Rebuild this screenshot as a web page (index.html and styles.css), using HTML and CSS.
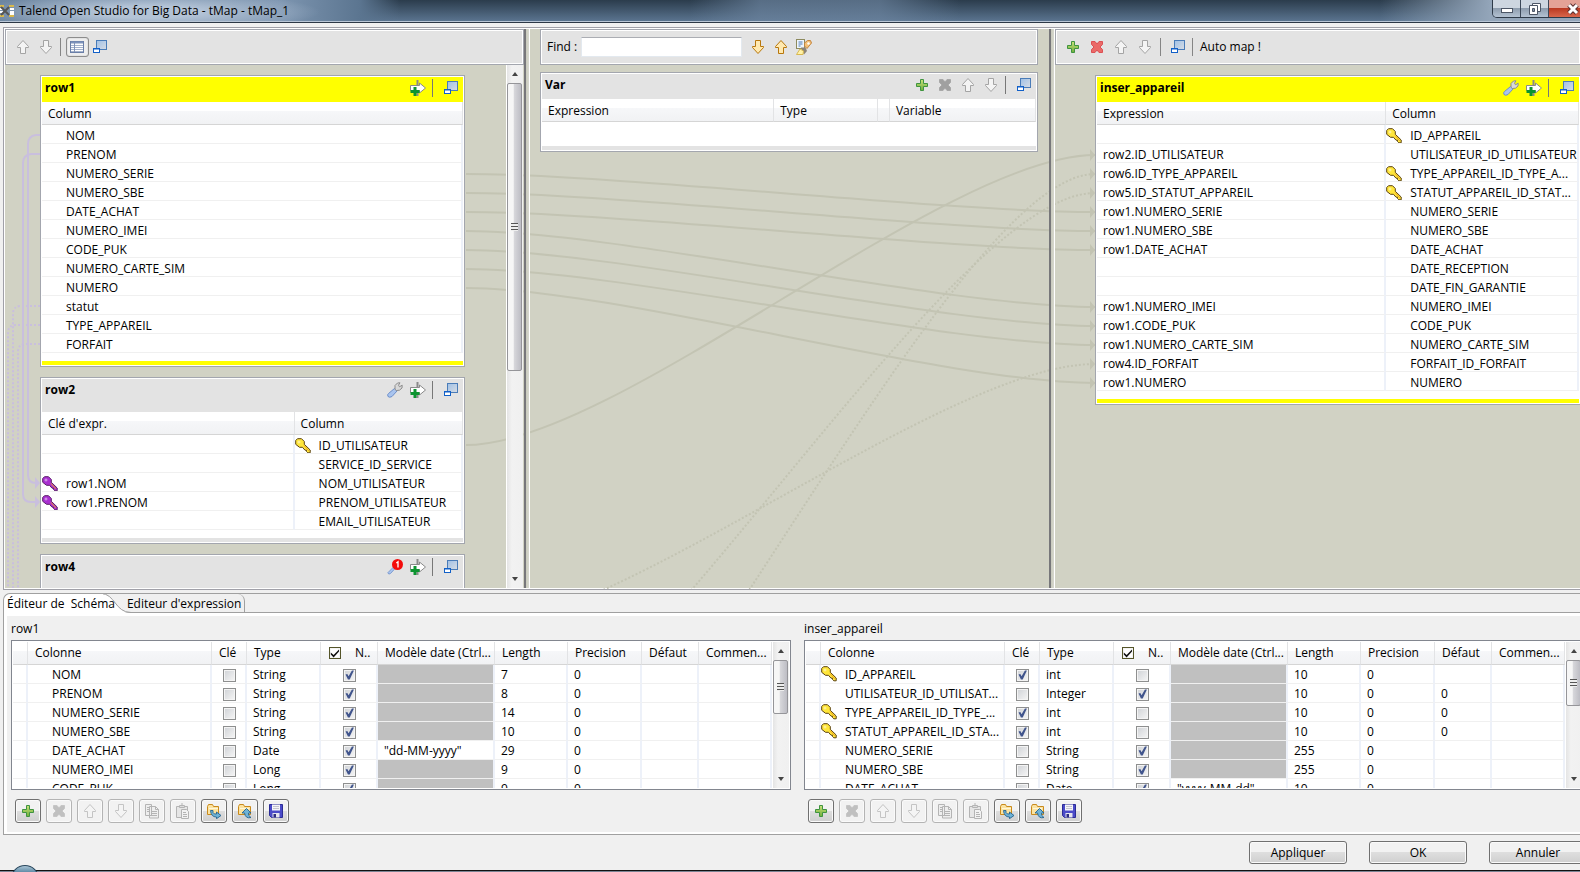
FILE: index.html
```html
<!DOCTYPE html>
<html lang="fr">
<head>
<meta charset="utf-8">
<title>Talend Open Studio for Big Data - tMap - tMap_1</title>
<link rel="stylesheet" href="styles.css">
</head>
<body>
<svg class="defs" aria-hidden="true">
  <defs>
    <linearGradient id="g-green" x1="0" y1="0" x2="0" y2="1"><stop offset="0" stop-color="#c9e27a"/><stop offset="1" stop-color="#6fae3c"/></linearGradient>
    <linearGradient id="g-win" x1="0" y1="0" x2="1" y2="1"><stop offset="0" stop-color="#9fc0e6"/><stop offset="1" stop-color="#d8dde4"/></linearGradient>
    <symbol id="up" viewBox="0 0 16 16"><path d="M8 1.5 13.5 7.5V8.5H10.5V14.5H5.5V8.5H2.5V7.5Z"/></symbol>
    <symbol id="down" viewBox="0 0 16 16"><path d="M8 14.5 13.5 8.5V7.5H10.5V1.5H5.5V7.5H2.5V8.5Z"/></symbol>
    <symbol id="plus" viewBox="0 0 16 16"><path d="M6.5 2.5h3v4h4v3h-4v4h-3v-4h-4v-3h4z"/></symbol>
    <symbol id="cross" viewBox="0 0 16 16"><path d="M2.5 2.5H6L8 5l2-2.500h3.500V5.500L11 8l2.500 2.500V13.500H10L8 11l-2 2.500H2.500V10.500L5 8 2.500 5.500Z"/></symbol>
    <symbol id="min" viewBox="0 0 16 16"><rect x="4.500" y="1.500" width="10" height="9" fill="url(#g-win)" stroke="#4a7cb8"/><rect x="1.500" y="9.500" width="6" height="4" fill="#fff" stroke="#1260c8"/><path d="M1 10h7" stroke="#1260c8"/></symbol>
    <symbol id="list" viewBox="0 0 16 16"><rect x="1.500" y="2.500" width="13" height="11" fill="#fff" stroke="#6a7fa8"/><path d="M2 3.500h12" stroke="#7d93bb" stroke-width="2"/><path d="M2 6.500h12M2 8.500h12M2 10.500h12M2 12.500h12" stroke="#a4b2cc"/><path d="M5.500 4v9" stroke="#8294b8"/></symbol>
    <symbol id="wrench" viewBox="0 0 16 16"><path d="M7.500 6.500 10 9 5 14.500Q2.500 16 1 14.500 0 12.500 1.500 11.500Z" fill="#a9c4ee" stroke="#6d8fca"/><path d="M8 7.500V3.500L10.500 1 13 .8 11.500 3.200 12.500 4.800 15.200 3.200 15 6 12.500 8.200 9.500 8.500Z" fill="#d9d9d9" stroke="#8c8c8c"/></symbol>
    <symbol id="alert" viewBox="0 0 16 16"><path d="M7 7.500 8.500 9 3.500 14.500Q1.500 16 .8 13.800Z" fill="#a9c4ee" stroke="#7d9bd0"/><circle cx="10.500" cy="5.500" r="5.500" fill="#f30c0c"/><path d="M9.300 4 11 2.800V8.500" fill="none" stroke="#fff" stroke-width="1.300"/></symbol>
    <symbol id="add" viewBox="0 0 16 16"><path d="M7.500 0V16" stroke="#8a8a8a" stroke-width="2"/><path d="M.5 5.500H9.500V3L15.500 8 9.500 13V10.500H.5Z" fill="#fff" stroke="#8a8a8a"/><path d="M5 7v9M.5 11.500h9" stroke="#0c9430" stroke-width="3"/></symbol>
    <symbol id="key" viewBox="0 0 16 16"><path d="M2.500 .7H6.500L9.300 3.500V6.300L15.200 12V14.800H12.800L11.500 13.500V12.200H10L7.500 9.300H4.500L.7 6.300V2.500Z"/><path class="ks" d="M9 7.500 13.800 12.800"/><path d="M2.500 4h3M4 2.500v3" stroke="#fff" opacity=".6"/></symbol>
    <symbol id="find" viewBox="0 0 16 16"><rect x=".5" y=".5" width="8" height="9" fill="#eef5fd" stroke="#8d8a5e"/><path d="M2.500 3h4M2.500 5h4M2.500 7h2" stroke="#4b78b4"/><path d="M8.500 7V4L11.500 1.500H14.500L15.500 4 11 9.500Z" fill="#f3c078" stroke="#c48640"/><circle cx="12.500" cy="4.500" r="1.200" fill="#fff"/><path d="M5 8.500H9.500L11 12 8 15.500 6 12Z" fill="#8b8478"/><path d="M4 10 .5 15.500H7L7.500 12Z" fill="#fff2a8" stroke="#d8b850"/></symbol>
    <symbol id="copy" viewBox="0 0 16 16"><path d="M1.500 1.500h6v11h-6zM5.500 3.500h6l3 3v8.500h-9zM11.500 3.500v3h3" fill="#eee" stroke="#b4b4b4"/><path d="M7 8.500h6M7 10.500h6M7 12.500h6M3 4.500h2M3 6.500h2M3 8.500h2" stroke="#b4b4b4"/></symbol>
    <symbol id="paste" viewBox="0 0 16 16"><path d="M1.500 3.500h11v11h-11z" fill="#e6e6e6" stroke="#b4b4b4"/><path d="M4.500 2.500h5v2h-5zM6 1h2" fill="#ddd" stroke="#b4b4b4"/><path d="M6.500 6.500h5l2 2v7h-7z" fill="#f2f2f2" stroke="#b4b4b4"/><path d="M8 9.500h3M8 11.500h4M8 13.500h4" stroke="#b4b4b4"/></symbol>
    <symbol id="import" viewBox="0 0 16 16"><path d="M1.500 3.500 2.500 1.500H6.500L7.500 3.500H12.500V11.500H1.500Z" fill="#fbe3a0" stroke="#c98a1c"/><path d="M3 5.500h9" stroke="#fff6d8"/><path d="M4.500 7.500H7V9.500Q8 11.500 10.500 11V9L15 12.500 10.500 15.700V14Q5 14 4.500 7.500Z" fill="#6fb3d6" stroke="#24628f" stroke-width=".9"/></symbol>
    <symbol id="export" viewBox="0 0 16 16"><path d="M1.500 3.500 2.500 1.500H6.500L7.500 3.500H13.500V11.500H1.500Z" fill="#fbe3a0" stroke="#c98a1c"/><path d="M3 5.500h9" stroke="#fff6d8"/><path d="M9.500 5.500 14 10H11.500Q11 13 14 14.500 8.500 16 7.500 10H5Z" fill="#6fb3d6" stroke="#24628f" stroke-width=".9"/></symbol>
    <symbol id="save" viewBox="0 0 16 16"><path d="M1.500 1.500h13v13h-11l-2-2z" fill="#4a4ac8" stroke="#2c2c96"/><path d="M4 1.500h8v6H4z" fill="#f4f4f8"/><path d="M5 3.500h6M5 5.500h6" stroke="#c4c4cc"/><path d="M4.500 10h7v4.500h-7z" fill="#e4e4ee"/><path d="M5.500 11h2.500v3.500H5.500z" fill="#2c2c80"/></symbol>
  </defs>
</svg>

<header class="titlebar">
  <svg class="app-icon" viewBox="0 0 14 16" aria-hidden="true"><path d="M0 3h4M0 13h4M9 3h5M9 13h5" stroke="#d8b84c" stroke-width="2"/><path d="M0 6h3M0 9h3M10 6h4M10 9h4M10 11h4" stroke="#fff" stroke-width="2"/><path d="M1 4 9 12M9 4 1 12" stroke="#555" stroke-width="2"/></svg>
  <h1>Talend Open Studio for Big Data - tMap - tMap_1</h1>
  <div class="win-buttons">
    <button aria-label="Réduire"><svg viewBox="0 0 16 14"><rect x="2.500" y="6.500" width="11" height="4" fill="#fff" stroke="#4c5666"/></svg></button>
    <button aria-label="Restaurer"><svg viewBox="0 0 16 14"><path d="M5.500 1.500h8v8h-8z" fill="#fff" stroke="#4c5666"/><path d="M2.500 3.500h8v9h-8z" fill="#fff" stroke="#4c5666"/><path d="M5.500 6.500h2v3h-2z" fill="#8594a8" stroke="#4c5666"/></svg></button>
    <button class="close" aria-label="Fermer"><svg viewBox="0 0 16 14"><path d="M4 3 12 11M12 3 4 11" stroke="#5a3030" stroke-width="5"/><path d="M4 3 12 11M12 3 4 11" stroke="#fff" stroke-width="3"/></svg></button>
  </div>
</header>

<main class="mapper">
  <svg class="links" aria-hidden="true">
    <g transform="translate(-4 -28)">
      <g class="flow">
        <path d="M466 174C616 174 945 212 1095 212"/>
        <path d="M466 193C616 193 945 231 1095 231"/>
        <path d="M466 212C616 212 945 250 1095 250"/>
        <path d="M466 231C616 231 945 307 1095 307"/>
        <path d="M466 250C616 250 945 326 1095 326"/>
        <path d="M466 269C616 269 945 345 1095 345"/>
        <path d="M466 288C616 288 945 383 1095 383"/>
        <path d="M466 445C616 445 945 155 1095 155"/>
      </g>
      <g class="flow dotted">
        <path d="M466 910C616 910 945 174 1095 174"/>
        <path d="M466 774C616 774 945 193 1095 193"/>
        <path d="M466 630C616 630 945 364 1095 364"/>
      </g>
      <path class="heads" d="M1090 149v12l5-6zM1090 168v12l5-6zM1090 187v12l5-6zM1090 206v12l5-6zM1090 225v12l5-6zM1090 244v12l5-6zM1090 301v12l5-6zM1090 320v12l5-6zM1090 339v12l5-6zM1090 358v12l5-6zM1090 377v12l5-6z"/>
      <g class="lookup">
        <path d="M40 135H36Q28 136 28 144V475Q28 483 36 483"/>
        <path d="M40 154H31Q23 155 23 163V494Q23 502 31 502H36"/>
      </g>
      <path class="lookup-heads" d="M35 477v12l5-6zM35 496v12l5-6z"/>
      <g class="lookup dotted">
        <path d="M40 306H21Q13 306 13 314V588"/>
        <path d="M40 325H16Q8 325 8 333V588"/>
        <path d="M40 344H26Q18 344 18 352V588"/>
      </g>
    </g>
  </svg>

  <section class="zone">
    <div class="bar">
      <button class="ib" aria-label="Monter" disabled><svg class="gray"><use href="#up"/></svg></button>
      <button class="ib" aria-label="Descendre" disabled><svg class="gray"><use href="#down"/></svg></button>
      <i class="sep"></i>
      <button class="ib toggled" aria-label="Schéma" aria-pressed="true"><svg><use href="#list"/></svg></button>
      <button class="ib" aria-label="Réduire tout"><svg><use href="#min"/></svg></button>
    </div>
    <div class="scroll-area">
      <div class="canvas inputs">
        <article class="box active">
          <header><h2>row1</h2><button class="ib" aria-label="Ajouter"><svg><use href="#add"/></svg></button><i class="sep"></i><button class="ib last" aria-label="Réduire"><svg><use href="#min"/></svg></button></header>
          <table class="map">
            <thead><tr><th>Column</th></tr></thead>
            <tbody class="inset">
              <tr><td>NOM</td></tr><tr><td>PRENOM</td></tr><tr><td>NUMERO_SERIE</td></tr><tr><td>NUMERO_SBE</td></tr>
              <tr><td>DATE_ACHAT</td></tr><tr><td>NUMERO_IMEI</td></tr><tr><td>CODE_PUK</td></tr><tr><td>NUMERO_CARTE_SIM</td></tr>
              <tr><td>NUMERO</td></tr><tr><td>statut</td></tr><tr><td>TYPE_APPAREIL</td></tr><tr><td>FORFAIT</td></tr>
            </tbody>
          </table>
        </article>
        <article class="box tall">
          <header><h2>row2</h2><button class="ib" aria-label="Paramètres"><svg><use href="#wrench"/></svg></button><button class="ib" aria-label="Ajouter"><svg><use href="#add"/></svg></button><i class="sep"></i><button class="ib last" aria-label="Réduire"><svg><use href="#min"/></svg></button></header>
          <table class="map">
            <colgroup><col><col class="w40"></colgroup>
            <thead><tr><th>Clé d'expr.</th><th>Column</th></tr></thead>
            <tbody class="inset">
              <tr><td></td><td><svg class="key"><use href="#key"/></svg>ID_UTILISATEUR</td></tr>
              <tr><td></td><td>SERVICE_ID_SERVICE</td></tr>
              <tr><td><svg class="key purple"><use href="#key"/></svg>row1.NOM</td><td>NOM_UTILISATEUR</td></tr>
              <tr><td><svg class="key purple"><use href="#key"/></svg>row1.PRENOM</td><td>PRENOM_UTILISATEUR</td></tr>
              <tr><td></td><td>EMAIL_UTILISATEUR</td></tr>
            </tbody>
          </table>
        </article>
        <article class="box tall">
          <header><h2>row4</h2><button class="ib" aria-label="Erreur"><svg><use href="#alert"/></svg></button><button class="ib" aria-label="Ajouter"><svg><use href="#add"/></svg></button><i class="sep"></i><button class="ib last" aria-label="Réduire"><svg><use href="#min"/></svg></button></header>
        </article>
      </div>
      <div class="vscroll"><i class="arrow-up"></i><span class="thumb main-thumb"></span><i class="arrow-down"></i></div>
    </div>
  </section>
  <div class="splitter"></div>
  <section class="zone vars">
    <form class="bar">
      <label for="find">Find :</label><input id="find" type="text">
      <button type="button" class="ib" aria-label="Suivant"><svg class="gold"><use href="#down"/></svg></button>
      <button type="button" class="ib" aria-label="Précédent"><svg class="gold"><use href="#up"/></svg></button>
      <button type="button" class="ib" aria-label="Surligner"><svg><use href="#find"/></svg></button>
    </form>
    <article class="box">
      <header><h2>Var</h2><button class="ib" aria-label="Ajouter"><svg class="green"><use href="#plus"/></svg></button><button class="ib" aria-label="Supprimer" disabled><svg class="dim"><use href="#cross"/></svg></button><button class="ib" aria-label="Monter" disabled><svg class="gray"><use href="#up"/></svg></button><button class="ib" aria-label="Descendre" disabled><svg class="gray"><use href="#down"/></svg></button><i class="sep"></i><button class="ib last" aria-label="Réduire"><svg><use href="#min"/></svg></button></header>
      <table class="map">
        <colgroup><col class="w47"><col class="w21"><col class="w2"><col></colgroup>
        <thead><tr><th>Expression</th><th>Type</th><th></th><th>Variable</th></tr></thead>
      </table>
      <div class="empty"></div>
    </article>
  </section>
  <div class="splitter"></div>
  <section class="zone outputs">
    <div class="bar">
      <button class="ib" aria-label="Ajouter"><svg class="green"><use href="#plus"/></svg></button>
      <button class="ib" aria-label="Supprimer"><svg class="red"><use href="#cross"/></svg></button>
      <button class="ib" aria-label="Monter" disabled><svg class="gray"><use href="#up"/></svg></button>
      <button class="ib" aria-label="Descendre" disabled><svg class="gray"><use href="#down"/></svg></button>
      <i class="sep"></i>
      <button class="ib spaced" aria-label="Réduire tout"><svg><use href="#min"/></svg></button>
      <i class="sep"></i>
      <button class="text-btn">Auto map !</button>
    </div>
    <div class="canvas">
      <article class="box active">
        <header><h2>inser_appareil</h2><button class="ib" aria-label="Paramètres"><svg><use href="#wrench"/></svg></button><button class="ib" aria-label="Ajouter"><svg><use href="#add"/></svg></button><i class="sep"></i><button class="ib last" aria-label="Réduire"><svg><use href="#min"/></svg></button></header>
        <table class="map">
          <colgroup><col><col class="w40"></colgroup>
          <thead><tr><th>Expression</th><th>Column</th></tr></thead>
          <tbody class="inset-last">
            <tr><td></td><td><svg class="key"><use href="#key"/></svg>ID_APPAREIL</td></tr>
            <tr><td>row2.ID_UTILISATEUR</td><td>UTILISATEUR_ID_UTILISATEUR</td></tr>
            <tr><td>row6.ID_TYPE_APPAREIL</td><td><svg class="key"><use href="#key"/></svg>TYPE_APPAREIL_ID_TYPE_A...</td></tr>
            <tr><td>row5.ID_STATUT_APPAREIL</td><td><svg class="key"><use href="#key"/></svg>STATUT_APPAREIL_ID_STAT...</td></tr>
            <tr><td>row1.NUMERO_SERIE</td><td>NUMERO_SERIE</td></tr>
            <tr><td>row1.NUMERO_SBE</td><td>NUMERO_SBE</td></tr>
            <tr><td>row1.DATE_ACHAT</td><td>DATE_ACHAT</td></tr>
            <tr><td></td><td>DATE_RECEPTION</td></tr>
            <tr><td></td><td>DATE_FIN_GARANTIE</td></tr>
            <tr><td>row1.NUMERO_IMEI</td><td>NUMERO_IMEI</td></tr>
            <tr><td>row1.CODE_PUK</td><td>CODE_PUK</td></tr>
            <tr><td>row1.NUMERO_CARTE_SIM</td><td>NUMERO_CARTE_SIM</td></tr>
            <tr><td>row4.ID_FORFAIT</td><td>FORFAIT_ID_FORFAIT</td></tr>
            <tr><td>row1.NUMERO</td><td>NUMERO</td></tr>
          </tbody>
        </table>
      </article>
    </div>
  </section>
</main>

<section class="editor">
  <nav class="tabs" role="tablist">
    <button role="tab" aria-selected="true" class="tab current">Éditeur de&nbsp; Schéma</button>
    <svg class="tab-edge" viewBox="0 0 36 20" aria-hidden="true"><path class="fillw" d="M0 1C14 1 14 20 30 20H0Z"/><path class="edge" d="M0 .5C14 .5 14 19.500 30 19.500H36"/></svg>
    <button role="tab" aria-selected="false" class="tab">Editeur d'expression</button>
  </nav>
  <div class="panes">
    <section class="pane">
      <h3>row1</h3>
      <div class="grid">
        <div class="grid-body">
        <table class="schema">
          <colgroup><col class="c0"><col class="c1"><col class="c2"><col class="c3"><col class="c4"><col class="c5"><col class="c6"><col class="c7"><col class="c8"><col></colgroup>
          <thead><tr><th></th><th>Colonne</th><th>Clé</th><th>Type</th><th><input type="checkbox" class="flat" aria-label="Nullable, tout" checked>N..</th><th>Modèle date (Ctrl...</th><th>Length</th><th>Precision</th><th>Défaut</th><th>Commen...</th></tr></thead>
          <tbody>
            <tr><td></td><td>NOM</td><td><input type="checkbox" aria-label="Clé"></td><td>String</td><td><input type="checkbox" aria-label="Nullable" checked></td><td class="na"></td><td>7</td><td>0</td><td></td><td></td></tr>
            <tr><td></td><td>PRENOM</td><td><input type="checkbox" aria-label="Clé"></td><td>String</td><td><input type="checkbox" aria-label="Nullable" checked></td><td class="na"></td><td>8</td><td>0</td><td></td><td></td></tr>
            <tr><td></td><td>NUMERO_SERIE</td><td><input type="checkbox" aria-label="Clé"></td><td>String</td><td><input type="checkbox" aria-label="Nullable" checked></td><td class="na"></td><td>14</td><td>0</td><td></td><td></td></tr>
            <tr><td></td><td>NUMERO_SBE</td><td><input type="checkbox" aria-label="Clé"></td><td>String</td><td><input type="checkbox" aria-label="Nullable" checked></td><td class="na"></td><td>10</td><td>0</td><td></td><td></td></tr>
            <tr><td></td><td>DATE_ACHAT</td><td><input type="checkbox" aria-label="Clé"></td><td>Date</td><td><input type="checkbox" aria-label="Nullable" checked></td><td>"dd-MM-yyyy"</td><td>29</td><td>0</td><td></td><td></td></tr>
            <tr><td></td><td>NUMERO_IMEI</td><td><input type="checkbox" aria-label="Clé"></td><td>Long</td><td><input type="checkbox" aria-label="Nullable" checked></td><td class="na"></td><td>9</td><td>0</td><td></td><td></td></tr>
            <tr><td></td><td>CODE_PUK</td><td><input type="checkbox" aria-label="Clé"></td><td>Long</td><td><input type="checkbox" aria-label="Nullable" checked></td><td class="na"></td><td>9</td><td>0</td><td></td><td></td></tr>
          </tbody>
        </table>
        </div>
        <div class="vscroll"><i class="arrow-up"></i><span class="thumb thumb-a"></span><i class="arrow-down"></i></div>
      </div>
      <div class="tools">
        <button aria-label="Ajouter"><svg class="green"><use href="#plus"/></svg></button><button aria-label="Supprimer" disabled><svg class="dim"><use href="#cross"/></svg></button><button aria-label="Monter" disabled><svg class="gray"><use href="#up"/></svg></button><button aria-label="Descendre" disabled><svg class="gray"><use href="#down"/></svg></button><button aria-label="Copier" disabled><svg><use href="#copy"/></svg></button><button aria-label="Coller" disabled><svg><use href="#paste"/></svg></button><button aria-label="Importer"><svg><use href="#import"/></svg></button><button aria-label="Exporter"><svg><use href="#export"/></svg></button><button aria-label="Enregistrer"><svg><use href="#save"/></svg></button>
      </div>
    </section>
    <section class="pane">
      <h3>inser_appareil</h3>
      <div class="grid">
        <div class="grid-body">
        <table class="schema">
          <colgroup><col class="c0"><col class="c1"><col class="c2"><col class="c3"><col class="c4"><col class="c5"><col class="c6"><col class="c7"><col class="c8"><col></colgroup>
          <thead><tr><th></th><th>Colonne</th><th>Clé</th><th>Type</th><th><input type="checkbox" class="flat" aria-label="Nullable, tout" checked>N..</th><th>Modèle date (Ctrl...</th><th>Length</th><th>Precision</th><th>Défaut</th><th>Commen...</th></tr></thead>
          <tbody>
            <tr><td></td><td><svg class="key"><use href="#key"/></svg>ID_APPAREIL</td><td><input type="checkbox" aria-label="Clé" checked></td><td>int</td><td><input type="checkbox" aria-label="Nullable"></td><td class="na"></td><td>10</td><td>0</td><td></td><td></td></tr>
            <tr><td></td><td>UTILISATEUR_ID_UTILISAT...</td><td><input type="checkbox" aria-label="Clé"></td><td>Integer</td><td><input type="checkbox" aria-label="Nullable" checked></td><td class="na"></td><td>10</td><td>0</td><td>0</td><td></td></tr>
            <tr><td></td><td><svg class="key"><use href="#key"/></svg>TYPE_APPAREIL_ID_TYPE_...</td><td><input type="checkbox" aria-label="Clé" checked></td><td>int</td><td><input type="checkbox" aria-label="Nullable"></td><td class="na"></td><td>10</td><td>0</td><td>0</td><td></td></tr>
            <tr><td></td><td><svg class="key"><use href="#key"/></svg>STATUT_APPAREIL_ID_STA...</td><td><input type="checkbox" aria-label="Clé" checked></td><td>int</td><td><input type="checkbox" aria-label="Nullable"></td><td class="na"></td><td>10</td><td>0</td><td>0</td><td></td></tr>
            <tr><td></td><td>NUMERO_SERIE</td><td><input type="checkbox" aria-label="Clé"></td><td>String</td><td><input type="checkbox" aria-label="Nullable" checked></td><td class="na"></td><td>255</td><td>0</td><td></td><td></td></tr>
            <tr><td></td><td>NUMERO_SBE</td><td><input type="checkbox" aria-label="Clé"></td><td>String</td><td><input type="checkbox" aria-label="Nullable" checked></td><td class="na"></td><td>255</td><td>0</td><td></td><td></td></tr>
            <tr><td></td><td>DATE_ACHAT</td><td><input type="checkbox" aria-label="Clé"></td><td>Date</td><td><input type="checkbox" aria-label="Nullable" checked></td><td>"yyyy-MM-dd"</td><td>10</td><td>0</td><td></td><td></td></tr>
          </tbody>
        </table>
        </div>
        <div class="vscroll"><i class="arrow-up"></i><span class="thumb thumb-b"></span><i class="arrow-down"></i></div>
      </div>
      <div class="tools">
        <button aria-label="Ajouter"><svg class="green"><use href="#plus"/></svg></button><button aria-label="Supprimer" disabled><svg class="dim"><use href="#cross"/></svg></button><button aria-label="Monter" disabled><svg class="gray"><use href="#up"/></svg></button><button aria-label="Descendre" disabled><svg class="gray"><use href="#down"/></svg></button><button aria-label="Copier" disabled><svg><use href="#copy"/></svg></button><button aria-label="Coller" disabled><svg><use href="#paste"/></svg></button><button aria-label="Importer"><svg><use href="#import"/></svg></button><button aria-label="Exporter"><svg><use href="#export"/></svg></button><button aria-label="Enregistrer"><svg><use href="#save"/></svg></button>
      </div>
    </section>
  </div>
</section>

<footer class="actions">
  <button>Appliquer</button><button>OK</button><button>Annuler</button>
</footer>
<div class="taskbar"><span class="orb"></span></div>
</body>
</html>
```

FILE: styles.css
```css
* { box-sizing: border-box; }

body {
  margin: 0;
  height: 100vh;
  display: flex;
  flex-direction: column;
  overflow: hidden;
  background: #f0f0f0;
  color: #000;
  font: 12px/16px "Open Sans", "Noto Sans", sans-serif;
}

button, input { font: inherit; color: inherit; margin: 0; padding: 0; }
h1, h2, h3 { margin: 0; font-size: 12px; font-weight: 400; }
.defs { position: absolute; width: 0; height: 0; }

/* Title bar */
.titlebar {
  flex: none;
  height: 23px;
  display: flex;
  align-items: flex-start;
  border-bottom: 1px solid #2c3846;
  box-shadow: inset 0 -1px #b9c6d6;
  background:
    radial-gradient(ellipse 170px 20px at 150px 12px, #b3c3d6 0 30%, transparent 100%),
    linear-gradient(90deg, #6d86a1 0, #7d95b0 280px, #5b7590 360px, transparent 400px 690px, #6b839eb0 760px 880px, transparent 960px 1380px, #93a5b9 1490px),
    linear-gradient(#2b3c4c, #5c7692);
}
.app-icon { width: 14px; height: 16px; margin-top: 3px; }
.titlebar h1 { flex: 1; padding: 2px 0 0 5px; line-height: 18px; }
.win-buttons {
  display: flex;
  margin-right: -18px;
  border: 1px solid #2e3a48;
  border-top: 0;
  border-radius: 0 0 5px 5px;
  overflow: hidden;
}
.win-buttons button {
  width: 28px;
  height: 17px;
  border: 0;
  border-right: 1px solid #3c4858;
  background: linear-gradient(#cdd6e0 0 45%, #8e9dae 50%, #b4c2d2);
}
.win-buttons svg { width: 16px; height: 14px; display: block; margin: auto; }
.win-buttons .close { width: 48px; border: 0; background: linear-gradient(#e4a296 0 45%, #bb3a22 50%, #d8674c); }

/* Mapper */
.mapper {
  flex: 1;
  min-height: 0;
  margin: 4px 0 3px 3px;
  padding: 1px 0 1px 1px;
  border: 1px solid #a0a0a8;
  border-right: 0;
  box-shadow: inset 1px 1px #fff, inset 0 -1px #fff;
  position: relative;
  isolation: isolate;
  display: grid;
  grid-template-columns: 519fr 6px 519fr 6px 525fr;
  grid-template-rows: minmax(0, 1fr);
  background: #d1d2c4;
}
.links { position: absolute; inset: 0; width: 100%; height: 100%; z-index: -1; }
.flow, .lookup { fill: none; stroke-width: 2; stroke: #c3c4b3; }
.lookup { stroke: #c9bfde; }
.dotted { stroke-dasharray: 2 2; }
.heads { fill: #c3c4b3; }
.lookup-heads { fill: #c9bfde; }

.zone { min-width: 0; min-height: 0; display: flex; flex-direction: column; overflow: hidden; }
.splitter {
  border-left: 2px solid #77777a;
  border-right: 1px solid #fff;
  background: linear-gradient(90deg, #c9cabd, #d8d9cf);
}
.bar {
  flex: none;
  height: 36px;
  display: flex;
  align-items: center;
  padding-left: 9px;
  border: 1px solid #a3a6ae;
  box-shadow: inset 0 0 0 1px #fff;
  background: #e3e3e3;
}
.ib { width: 16px; height: 16px; flex: none; border: 0; margin-right: 7px; background: none; }
.ib svg { display: block; width: 16px; height: 16px; }
.toggled {
  width: 23px;
  height: 20px;
  padding: 1px 2px;
  border: 1px solid #8c8c8c;
  border-radius: 3px;
  background: #eee;
  margin: 0 3px 0 5px;
  box-shadow: inset 0 0 1px #888;
}
.sep { flex: none; width: 1px; height: 18px; background: #858585; }
.bar .ib + .sep { margin-left: -1px; }
.gray { fill: #f4f4f4; stroke: #a4a4a4; }
.gold { fill: #ffe9b0; stroke: #b8770c; }
.green { fill: url(#g-green); stroke: #3f9440; }
.red { fill: #ea6a68; stroke: #dc5054; }
.dim { fill: #a0a0a0; stroke: #a8a8a8; }

.scroll-area { flex: 1; min-height: 0; display: flex; }
.canvas { flex: 1; min-width: 0; display: flex; flex-direction: column; gap: 10px; padding: 10px 0 0 40px; overflow: hidden; }
.canvas.inputs { padding: 10px 41px 0 35px; }
.outputs .box { margin-right: -1px; }

.box { flex: none; border: 1px solid #a3a6ae; padding: 1px; background: #fff; }
.box::after { content: ""; display: block; height: 4px; margin-top: 8px; background: #e3e3e3; }
.box > header { height: 25px; display: flex; align-items: center; padding-left: 3px; padding-bottom: 3px; background: #e3e3e3; }
.box.tall > header { height: 33px; padding-bottom: 11px; }
.box > header h2 { flex: 1; font-weight: 700; }
.box > header .sep { margin: 0 10px 0 -1px; background: #777; }
.box > header .last { margin-right: 4px; }
.box.active > header, .box.active::after { background: #ff0; }
.empty { height: 24px; }
.vars .box::after { margin-top: 0; }
.vars .bar { margin: 0 11px 7px 10px; padding-left: 6px; }
.vars .box { margin: 0 11px 0 10px; }
.bar input {
  width: 161px;
  height: 20px;
  margin: 0 8px 0 4px;
  padding: 0 4px;
  border: 1px solid #e3e9ef;
  border-top-color: #abadb3;
  background: #fff;
  outline: none;
}
.outputs .bar { border-right: 0; }
.outputs .bar .ib { margin-right: 8px; }
.outputs .bar .ib.spaced { margin: 0 7px 0 9px; }
.text-btn { border: 0; background: none; margin-left: 7px; }

table { width: 100%; border-collapse: separate; border-spacing: 0; table-layout: fixed; }
th, td { padding: 0; white-space: nowrap; overflow: hidden; text-align: left; font-weight: 400; }
th {
  height: 23px;
  padding-left: 7px;
  border-bottom: 1px solid #d5d5d5;
  border-right: 1px solid #e2e3e5;
  background: linear-gradient(#fff 0 9px, #f6f7f9 9px, #f1f2f4);
}
td {
  height: 19px;
  line-height: 16px;
  padding: 2px 0 0 6px;
  border-bottom: 1px solid #f0f0f0;
  border-right: 2px solid #edf1f9;
}
.map th { padding: 2px 0 0 6px; }
.map td { background: #fff; line-height: 14px; padding-top: 4px; }
.map .inset td, .map .inset-last td:last-child { padding-left: 24px; }
.w40 { width: 40%; }
.w47 { width: 47%; }
.w21 { width: 21%; }
.w2 { width: 12px; }
.key { width: 16px; height: 16px; margin: -1px 8px -1px -24px; vertical-align: top; fill: #ffe63a; stroke: #5c4312; }
.ks { stroke: #f0a21c; }
.purple { fill: #a82fd0; stroke: #5a2068; }
.purple .ks { stroke: #c03a9c; }

/* Scroll bars */
.vscroll {
  flex: none;
  width: 17px;
  display: flex;
  flex-direction: column;
  align-items: stretch;
  border-left: 1px solid #fff;
  background: linear-gradient(90deg, #e4e4e4, #f2f2f2 30%, #f0f0f0);
}
.arrow-up, .arrow-down { flex: none; height: 18px; display: grid; place-items: center; }
.arrow-down { margin-top: auto; }
.arrow-up::after, .arrow-down::after { content: ""; border: 3px solid transparent; }
.arrow-up::after { border-bottom: 4px solid #444; border-top: 0; }
.arrow-down::after { border-top: 4px solid #444; border-bottom: 0; }
.thumb {
  display: grid;
  place-items: center;
  margin-right: 1px;
  border: 1px solid #959599;
  border-radius: 2px;
  background: linear-gradient(90deg, #f6f6f6 0 40%, #d6d6da 50%, #bdbdc4);
}
.thumb::after { content: ""; width: 7px; height: 8px; background: repeating-linear-gradient(#555 0 1px, #eee 1px 3px); }
.scroll-area .vscroll { margin-right: 1px; }
.main-thumb { height: 55%; }
.thumb-a { height: 54px; }
.thumb-b { height: 46px; }

/* Schema editor */
.editor {
  flex: none;
  margin-left: 3px;
  border: 1px solid #a0a0a0;
  border-right: 0;
  border-top-left-radius: 7px;
}
.tabs { height: 19px; display: flex; border-bottom: 1px solid #a0a0a0; }
.tab { border: 0; background: none; height: 19px; line-height: 18px; }
.tab.current {
  position: relative;
  z-index: 1;
  padding-left: 3px;
  border-top-left-radius: 7px;
  background: linear-gradient(90deg, #fff calc(100% - 12px), transparent 0);
}
.tab-edge { width: 36px; height: 20px; margin: -1px -10px 0 -14px; flex: none; }
.fillw { fill: #fff; }
.edge { fill: none; stroke: #a0a0a0; }
.tab:last-child { padding-right: 3px; border-right: 1px solid #a0a0a0; border-top-right-radius: 7px; }
.panes {
  display: grid;
  grid-template-columns: 1fr 1fr;
  gap: 13px;
  margin-right: -4px;
  padding: 8px 0 11px 7px;
  box-shadow: inset 3px 3px #fff, inset 0 -2px #fff;
}
.pane { min-width: 0; }
.pane h3 { margin-bottom: 3px; line-height: 16px; }
.grid { height: 150px; display: flex; border: 1px solid #82868f; padding: 1px; background: #fff; overflow: hidden; }
.grid-body { flex: 1; min-width: 0; overflow: hidden; }
.schema td:nth-child(2) { padding-left: 24px; }
.schema td:nth-child(3) { padding-left: 11px; }
.schema td:nth-child(5) { padding-left: 22px; }
.schema th:first-child { padding: 0; }
.c0 { width: 15px; }
.c1 { width: 184px; }
.c2 { width: 35px; }
.c3 { width: 74px; }
.c4 { width: 57px; }
.c5 { width: 117px; }
.c6 { width: 73px; }
.c7 { width: 74px; }
.c8 { width: 57px; }
.na { background: #c0c0c0; background-clip: padding-box; }

input[type="checkbox"] {
  appearance: none;
  display: block;
  width: 13px;
  height: 13px;
  border: 1px solid #8e8f8f;
  background: linear-gradient(135deg, #cfd2d6, #f6f6f6);
  box-shadow: inset 0 0 0 1px #f4f4f4;
}
input[type="checkbox"]:checked::before {
  content: "";
  display: block;
  width: 11px;
  height: 11px;
  background: #40548c;
  clip-path: polygon(14% 46%, 30% 42%, 42% 62%, 72% 8%, 90% 8%, 52% 92%, 36% 92%);
}
input[type="checkbox"].flat {
  display: inline-block;
  width: 12px;
  height: 12px;
  margin-left: 1px;
  margin-right: 14px;
  vertical-align: -2px;
  border-color: #55552a;
  background: #fff;
}
input[type="checkbox"].flat:checked::before { width: 10px; height: 10px; background: #111; clip-path: polygon(8% 45%, 36% 70%, 90% 14%, 90% 36%, 36% 94%, 8% 66%); }

.tools { display: flex; gap: 5px; padding: 9px 0 0 4px; }
.tools button, .actions button {
  border: 1px solid #707070;
  border-radius: 3px;
  background: linear-gradient(#f2f2f2 0 48%, #dedede 50%, #cfcfcf);
  box-shadow: inset 0 0 0 1px #fafafa;
}
.tools button { width: 26px; height: 24px; }
.tools button:disabled { border-color: #b4b4b4; background: #f2f2f2; }
.tools button:disabled .gray { stroke: #c4c4c4; }
.tools button:disabled .dim { fill: #c0c0c0; stroke: #c6c6c6; }
.tools svg { display: block; width: 16px; height: 16px; margin: auto; }

.actions { flex: none; display: flex; justify-content: flex-end; gap: 22px; padding: 6px 0; margin-right: -7px; }
.actions button { width: 98px; height: 23px; }

.taskbar { flex: none; height: 2px; background: #7b8494; border-top: 1px solid #111; position: relative; }
.orb { position: absolute; left: 11px; bottom: -20px; width: 28px; height: 27px; border: 1px solid #28465c; border-radius: 50%; background: linear-gradient(#a9c3d4, #4f7f9c 30%); }
```
